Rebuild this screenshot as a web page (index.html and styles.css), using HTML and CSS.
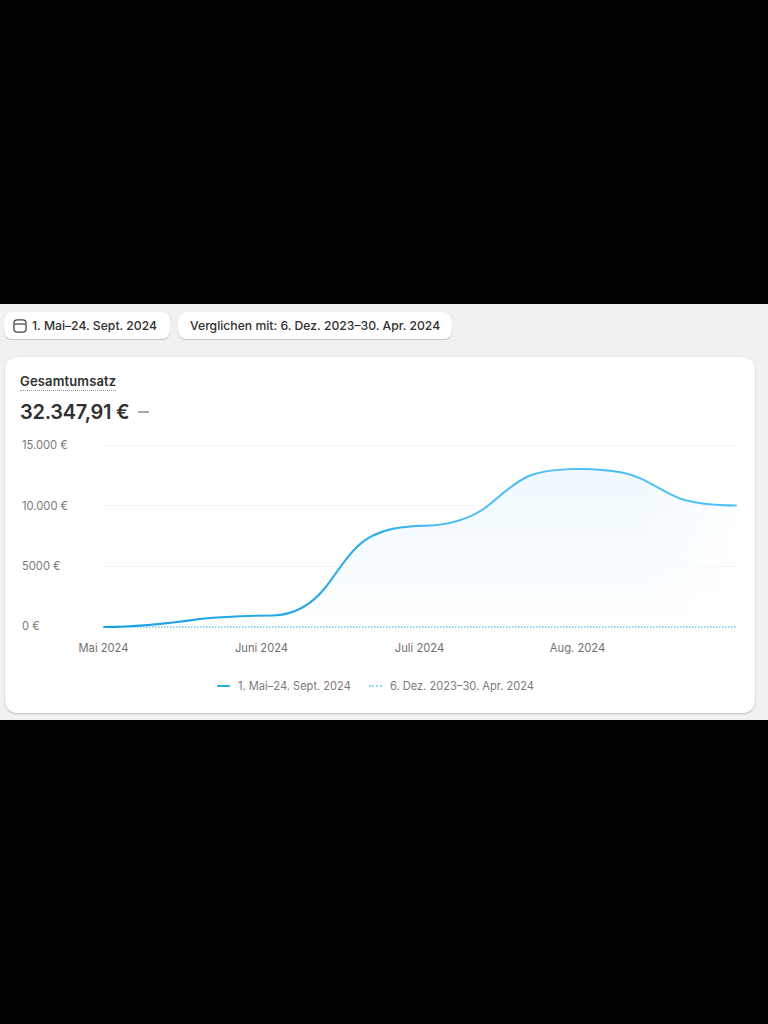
FILE: index.html
```html
<!DOCTYPE html>
<html lang="de">
<head>
<meta charset="utf-8">
<title>Gesamtumsatz</title>
<link rel="stylesheet" href="styles.css">
</head>
<body>
<main class="band">
  <div class="toolbar">
    <button class="pill pill-date">
      <svg class="cal" viewBox="0 0 14 14" width="14" height="14" aria-hidden="true">
        <rect x="0.9" y="0.9" width="12.2" height="12.2" rx="3.4" fill="none" stroke="#444" stroke-width="1.25"/>
        <path d="M1.2 5h11.6" fill="none" stroke="#444" stroke-width="1.25"/>
      </svg>
      1. Mai–24. Sept. 2024
    </button>
    <button class="pill pill-compare">Verglichen mit: 6. Dez. 2023–30. Apr. 2024</button>
  </div>
  <section class="card">
    <h2 class="title"><span class="title-text">Gesamtumsatz</span></h2>
    <div class="amount-row">
      <span class="amount">32.347,91 €</span>
      <span class="dash"></span>
    </div>
    <svg class="chart" viewBox="5 436 750 224" width="750" height="224" role="img">
      <defs>
        <linearGradient id="fillV" gradientUnits="userSpaceOnUse" x1="0" y1="468" x2="0" y2="627">
          <stop offset="0" stop-color="#f0f9fe"/>
          <stop offset="0.55" stop-color="#f7fcff"/>
          <stop offset="1" stop-color="#ffffff"/>
        </linearGradient>
        <linearGradient id="fadeH" gradientUnits="userSpaceOnUse" x1="640" y1="0" x2="735" y2="0">
          <stop offset="0" stop-color="#fff"/>
          <stop offset="1" stop-color="#fff" stop-opacity="0.1"/>
        </linearGradient>
        <mask id="fadeMask" maskUnits="userSpaceOnUse" x="100" y="440" width="640" height="200">
          <rect x="100" y="440" width="640" height="200" fill="url(#fadeH)"/>
        </mask>
        <linearGradient id="lineH" gradientUnits="userSpaceOnUse" x1="104" y1="0" x2="735" y2="0">
          <stop offset="0" stop-color="#1a9fe2"/>
          <stop offset="0.35" stop-color="#2aa9e8"/>
          <stop offset="0.6" stop-color="#49bdf4"/>
          <stop offset="1" stop-color="#4fc1f6"/>
        </linearGradient>
      </defs>
      <g class="grid">
        <line x1="104" y1="445.5" x2="736" y2="445.5"/>
        <line x1="104" y1="505.5" x2="736" y2="505.5"/>
        <line x1="104" y1="566.5" x2="736" y2="566.5"/>
      </g>
      <path mask="url(#fadeMask)" fill="url(#fillV)" d="M104 627C130 627 165 624 200 619C228 616 250 615.600 273 615.500C295 615 312 604 325 588C340 569 352 546 372 536C386 529 400 526.500 425 525.800C448 525 468 519 482 510C498 499 510 484 530 475.500C548 468.500 590 466.500 622 472.500C645 477 660 491 680 498.500C695 503.500 715 505.500 736 505.500V627Z"/>
      <line class="prior" x1="104" y1="627" x2="736" y2="627"/>
      <path class="current" stroke="url(#lineH)" d="M104 627C130 627 165 624 200 619C228 616 250 615.600 273 615.500C295 615 312 604 325 588C340 569 352 546 372 536C386 529 400 526.500 425 525.800C448 525 468 519 482 510C498 499 510 484 530 475.500C548 468.500 590 466.500 622 472.500C645 477 660 491 680 498.500C695 503.500 715 505.500 736 505.500"/>
      <g class="y-labels">
        <text x="22" y="449">15.000 €</text>
        <text x="22" y="510">10.000 €</text>
        <text x="22" y="570">5000 €</text>
        <text x="22" y="630">0 €</text>
      </g>
      <g class="x-labels">
        <text x="103.500" y="652">Mai 2024</text>
        <text x="261.500" y="652">Juni 2024</text>
        <text x="419.500" y="652">Juli 2024</text>
        <text x="577.500" y="652">Aug. 2024</text>
      </g>
    </svg>
    <div class="legend">
      <span class="legend-item"><span class="key key-solid"></span>1. Mai–24. Sept. 2024</span>
      <span class="legend-item"><span class="key key-dotted"></span>6. Dez. 2023–30. Apr. 2024</span>
    </div>
  </section>
</main>
</body>
</html>
```
FILE: styles.css
```css
* { box-sizing: border-box; }
html, body { margin: 0; padding: 0; }
body {
  background: #000;
  width: 768px;
  height: 1024px;
  overflow: hidden;
  font-family: Inter, "Liberation Sans", sans-serif;
  color: #303030;
  padding-top: 304px;
}
.band {
  background: #f1f1f1;
  height: 416px;
  padding: 8px 13px 7px 4px;
  display: flex;
  flex-direction: column;
  gap: 18px;
}
.toolbar { display: flex; gap: 8px; height: 27px; }
.pill {
  font: 500 12.200px/16px Inter, "Liberation Sans", sans-serif;
  color: #303030;
  background: #fff;
  border: 0;
  border-radius: 8px;
  height: 27px;
  padding: 0 12px;
  display: flex;
  align-items: center;
  gap: 5px;
  box-shadow: 0 1px 1px rgba(0,0,0,.18), 0 0 1px rgba(0,0,0,.14);
  white-space: nowrap;
}
.pill-date { width: 166px; padding-left: 9px; }
.pill-compare { width: 274px; }
.card {
  margin-left: 1px;
  width: 750px;
  height: 356px;
  background: #fff;
  border-radius: 12px;
  box-shadow: 0 1px 2px rgba(0,0,0,.2), 0 0 1px rgba(0,0,0,.12);
  display: flex;
  flex-direction: column;
  padding-top: 16px;
}
.title { margin: 0 0 0 15px; font: 600 13px/17px Inter, "Liberation Sans", sans-serif; letter-spacing: .15px; height: 18px; }
.title-text { display: inline-block; border-bottom: 1px dotted #9a9a9a; height: 18px; }
.amount-row {
  margin: 9px 0 0 15px;
  height: 24px;
  display: flex;
  align-items: center;
  gap: 9px;
}
.amount { font: 600 20px/24px Inter, "Liberation Sans", sans-serif; letter-spacing: -.25px; color: #303030; }
.dash { width: 11px; height: 1.500px; background: #a8a8a8; }
.chart { display: block; margin-top: 12px; flex: none; }
.grid line { stroke: #f3f3f4; stroke-width: 1; }
.prior { stroke: #6ec4e6; stroke-width: 1.500; stroke-dasharray: 1.500 1.500; fill: none; }
.current { fill: none; stroke-width: 2; stroke-linecap: round; }
.y-labels text { font: 400 11.200px Inter, "Liberation Sans", sans-serif; fill: #7a7a7a; }
.x-labels text { font: 400 11.200px Inter, "Liberation Sans", sans-serif; fill: #6f6f6f; text-anchor: middle; }
.legend {
  margin-top: 19px;
  padding-left: 212px;
  display: flex;
  gap: 18px;
  font: 400 11.100px/14px Inter, "Liberation Sans", sans-serif;
  color: #7a7a7a;
}
.legend-item { display: flex; align-items: center; gap: 8px; white-space: nowrap; }
.key { display: inline-block; width: 13px; height: 0; }
.key-solid { border-top: 2px solid #29a8e8; border-radius: 1px; }
.key-dotted { border-top: 2px dotted #8fd6f5; }
```
